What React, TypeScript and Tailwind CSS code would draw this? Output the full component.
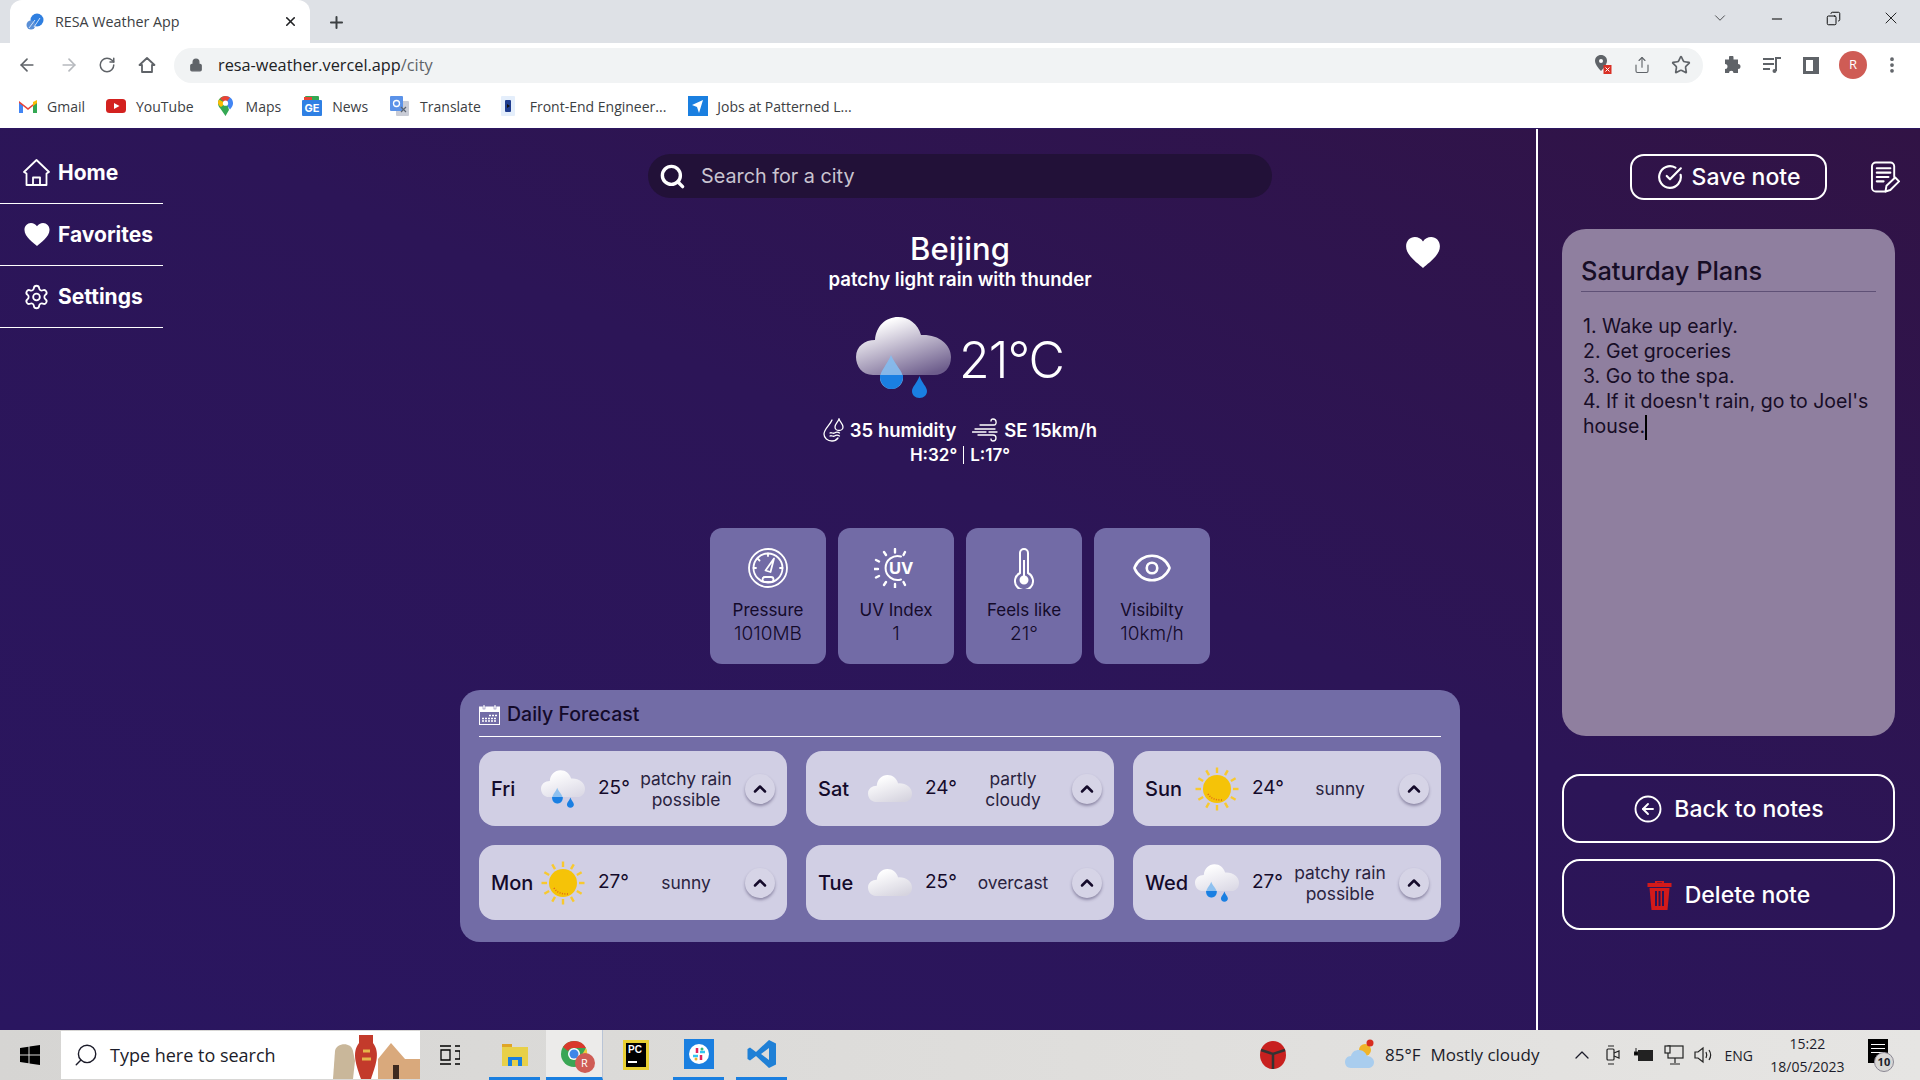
import {
  ArrowLeft,
  ArrowRight,
  ChevronDown,
  ChevronUp,
  CircleArrowLeft,
  CircleCheckBig,
  Copy,
  Eye,
  Lock,
  Minus,
  MoreVertical,
  Plus,
  RotateCw,
  Search,
  Settings,
  Share,
  Star,
  X,
} from 'lucide-react';

const Heart = ({ className }: { className: string }) => (
  <svg viewBox="0 0 24 22" className={className} fill="white">
    <path d="M12 22C9 19 0 13.5 0 6.5 0 2.8 2.8 0 6.2 0 8.6 0 10.8 1.2 12 3.2 13.2 1.2 15.4 0 17.8 0 21.2 0 24 2.8 24 6.5 24 13.5 15 19 12 22Z" />
  </svg>
);

const HouseIcon = () => (
  <svg viewBox="0 0 27 27" className="w-[27px] h-[27px]" fill="none" stroke="white" strokeWidth="1.8" strokeLinejoin="round">
    <path d="M1 13 13.5 1 26 13 23.5 14.5V26H3.5V14.5Z" />
    <path d="M10 26V18.5H17V26" />
  </svg>
);

const Cloud = ({ top, bottom, id }: { top: string; bottom: string; id: string }) => (
  <>
    <defs>
      <linearGradient id={id} x1="0.2" y1="0" x2="0.75" y2="1">
        <stop offset="0.1" stopColor={top} />
        <stop offset="1" stopColor={bottom} />
      </linearGradient>
    </defs>
    <path
      d="M17 58C6 58 0 49 0 40 0 29 9 23 19 23 20 9 30 0 42 0 53 0 62 7 65 18 82 17 95 27 95 40 95 51 88 58 78 58Z"
      fill={`url(#${id})`}
    />
  </>
);

const Drops = () => (
  <>
    <path d="M35 38C31 48 24 54 24 61 24 67 29 72 35.5 72 42 72 47 67 47 61 47 54 39 48 35 38Z" fill="#84bdf0" fillOpacity="0.9" />
    <path d="M24 58H47C47.5 66 42 72 35.5 72 29 72 23.5 66 24 58Z" fill="#1a7fe2" />
    <path d="M63.5 59C61 66 56 70 56 74 56 78 59 81 63.5 81 68 81 71 78 71 74 71 70 66 66 63.5 59Z" fill="#1a7fe2" />
  </>
);

const BigRainCloud = () => (
  <svg viewBox="0 0 95 81" className="w-[95px] h-[81px] shrink-0">
    <Cloud id="bigCloud" top="#ffffff" bottom="#6d5d8c" />
    <Drops />
  </svg>
);

const SmallRainCloud = () => (
  <svg viewBox="0 0 95 81" className="w-[44px] h-[38px]">
    <Cloud id="rainCloud" top="#ffffff" bottom="#dcdae6" />
    <Drops />
  </svg>
);

const SmallCloud = () => (
  <svg viewBox="0 0 95 58" className="w-[44px] h-[27px]">
    <Cloud id="plainCloud" top="#ffffff" bottom="#d6d4df" />
  </svg>
);

const SunIcon = () => (
  <svg viewBox="0 0 44 44" className="w-[44px] h-[44px]">
    {[0, 30, 60, 90, 120, 150, 180, 210, 240, 270, 300, 330].map((r) => (
      <rect key={r} x="20.8" y="0.5" width="2.4" height="5.5" fill="#f8c92f" transform={`rotate(${r} 22 22)`} />
    ))}
    <circle cx="22" cy="22" r="14" fill="#f5c308" />
    <path d="M13 27C16 32 21 33 27 33" stroke="#e0651a" strokeWidth="1.5" strokeDasharray="1 1.5" fill="none" />
  </svg>
);

const GaugeIcon = () => (
  <svg viewBox="0 0 40 40" className="w-[40px] h-[40px]" fill="none" stroke="white" strokeWidth="1.8" strokeLinecap="round">
    <circle cx="20" cy="20" r="19" />
    <circle cx="20" cy="20" r="14.5" />
    <path d="M17.5 22.5 26 10.5 22.5 24Z" strokeLinejoin="round" />
    <path d="M20 5.5V8M9.5 10.5 11.5 12.5M5.5 20H8M34.5 20H32" />
    <rect x="14.5" y="29" width="11" height="5" rx="2.5" />
  </svg>
);

const UvIcon = () => (
  <svg viewBox="0 0 44 40" className="w-[44px] h-[40px]" fill="none" stroke="white" strokeWidth="2" strokeLinecap="round">
    <path d="M27 8.5A12 12 0 1 0 27 31.5" />
    <path d="M21 1V4.5M10 4 12 7M2 12 5 13.5M0.5 21H4M2 29.5 5 28M10 37 12 34M21 39.5V36M31 4 29.5 7M31 37 29.5 34" strokeWidth="2.4" />
    <text x="15" y="26" fill="white" stroke="none" fontSize="16.5" fontWeight="700" fontFamily="Inter, sans-serif">
      UV
    </text>
  </svg>
);

const ThermometerIcon = () => (
  <svg viewBox="0 0 20 41" className="w-[20px] h-[41px]" fill="none" stroke="white" strokeWidth="2">
    <path d="M6 25V5A4 4 0 0 1 14 5V25A9 9 0 1 1 6 25Z" />
    <circle cx="10" cy="32" r="3.5" fill="white" />
    <path d="M10 12V30" />
  </svg>
);

const CalendarIcon = () => (
  <svg viewBox="0 0 21 20" className="w-[21px] h-[20px]">
    <rect x="0" y="1.5" width="21" height="18.5" fill="white" />
    <rect x="1" y="7" width="19" height="12" fill="#726ca6" />
    <rect x="4" y="0" width="2" height="4" fill="white" stroke="#726ca6" strokeWidth="0.5" />
    <rect x="15" y="0" width="2" height="4" fill="white" stroke="#726ca6" strokeWidth="0.5" />
    <path d="M3 16H18M3 13.5H18M10 10.5H18" stroke="white" strokeWidth="1.5" strokeDasharray="2 1" />
  </svg>
);

const NoteEditIcon = () => (
  <svg viewBox="0 0 30 32" className="w-[29px] h-[32px]" fill="none" stroke="white" strokeWidth="2" strokeLinecap="round">
    <path d="M15 31H5A4 4 0 0 1 1 27V5A4 4 0 0 1 5 1H20A4 4 0 0 1 24 5V16" />
    <path d="M6 7H20M6 11.5H20M6 16H18M6 20.5H13" strokeWidth="2.2" />
    <path d="M15 31 16 25 25 16.5 29 20.5 20 29.5Z" strokeLinejoin="round" />
  </svg>
);

const TrashIcon = () => (
  <svg viewBox="0 0 25 30" className="w-[25px] h-[30px]" fill="#d31a1a">
    <path d="M8 3V1H17V3H24.5V7H0.5V3ZM10 3H15V2.5H10Z" />
    <path d="M2.5 8H22.5L20.5 30H4.5ZM8 11V26H10V11ZM11.5 11V26H13.5V11ZM15 11V26H17V11Z" fillRule="evenodd" />
  </svg>
);

const HumidityIcon = () => (
  <svg viewBox="0 0 21 24" className="w-[21px] h-[24px]" fill="none" stroke="white" strokeWidth="1.3" strokeLinecap="round">
    <path d="M9 2C7 7 1 11 1 16 1 20 4.5 23 9 23 11.5 23 13.5 22 15 20" />
    <path d="M16 1C15 4 12 6 12 9 12 11 14 12.5 16 12.5 18 12.5 20 11 20 9 20 6 17 4 16 1Z" />
    <path d="M7 15C8.5 14 10 16 11.5 15S15 14 16.5 15M7 18C8.5 17 10 19 11.5 18S15 17 16.5 18" />
  </svg>
);

const WindIcon = () => (
  <svg viewBox="0 0 26 24" className="w-[26px] h-[24px]" fill="none" stroke="white" strokeWidth="1.3" strokeLinecap="round">
    <path d="M8 7H22C25 7 25 1 21 1 19.5 1 19 2 19 3" />
    <path d="M3 11H23M0.5 14H14M17 14H25" />
    <path d="M6 17H21C25 17 25 23 21 23 19.5 23 19 22 19 21" />
  </svg>
);

const Favicon = () => (
  <svg viewBox="0 0 18 18" className="w-[18px] h-[18px]">
    <circle cx="11" cy="7" r="6.5" fill="#2f7fe0" />
    <circle cx="5" cy="12" r="4.5" fill="#5a8fd6" />
    <path d="M3 15 9 7M8 14 14 5" stroke="#cfe2fa" strokeWidth="1" />
  </svg>
);

const GmailIcon = () => (
  <svg viewBox="0 0 18 14" className="w-[18px] h-[14px]">
    <path d="M0 2 9 9 18 2V14H14V7L9 11 4 7V14H0Z" fill="#ea4335" />
    <path d="M0 14H4V7L0 4Z" fill="#4285f4" />
    <path d="M14 14H18V4L14 7Z" fill="#34a853" />
    <path d="M14 7 18 4V1L14 3Z" fill="#fbbc04" />
  </svg>
);

const YoutubeIcon = () => (
  <svg viewBox="0 0 20 14" className="w-[20px] h-[14px]">
    <rect width="20" height="14" rx="3.5" fill="#d3211f" />
    <path d="M8 4 13.5 7 8 10Z" fill="white" />
  </svg>
);

const MapsIcon = () => (
  <svg viewBox="0 0 15 20" className="w-[15px] h-[20px]">
    <path d="M7.5 0C3.5 0 0 3 0 7.2 0 9.5 1 11 2.5 12.8L7.5 20 11 14Z" fill="#34a853" />
    <path d="M7.5 0C11.5 0 15 3 15 7.2 15 9.5 14 11 12 13.5L7.5 7Z" fill="#4285f4" />
    <path d="M1 3.5 7.5 7.2 3 11C1 9.5 0 8 0 7 0 5.5 0.5 4.5 1 3.5Z" fill="#fbbc04" />
    <path d="M2 2.5C3.5 1 5.5 0 7.5 0 9 0 10.5 0.5 12 1.5L7.5 7.2Z" fill="#ea4335" />
    <circle cx="7.5" cy="7.2" r="2.6" fill="white" />
  </svg>
);

const NewsIcon = () => (
  <svg viewBox="0 0 20 20" className="w-[20px] h-[20px]">
    <rect x="3" y="0" width="14" height="8" rx="1" fill="#34a853" />
    <rect x="2" y="1" width="8" height="6" fill="#ea4335" />
    <rect x="0" y="4" width="20" height="16" rx="1" fill="#2f80e4" />
    <text x="2.5" y="15.5" fontSize="11" fontWeight="700" fill="white" fontFamily="Inter, sans-serif">
      GE
    </text>
  </svg>
);

const TranslateIcon = () => (
  <svg viewBox="0 0 19 20" className="w-[19px] h-[20px]">
    <rect x="6" y="5" width="13" height="15" rx="1" fill="#c9ccd6" />
    <rect x="0" y="0" width="13" height="15" rx="1" fill="#5b92e8" />
    <circle cx="6.5" cy="7.5" r="3" fill="none" stroke="white" strokeWidth="1.3" />
    <path d="M11 11 16 16M16 11 11 16" stroke="#5b6472" strokeWidth="1.2" />
  </svg>
);

const FrontEndIcon = () => (
  <svg viewBox="0 0 14 20" className="w-[14px] h-[20px]">
    <rect width="14" height="20" rx="1" fill="#e4eefb" />
    <rect x="4" y="4" width="6" height="12" rx="1" fill="#1f3d8f" />
    <path d="M6 8 9 10 6 12Z" fill="#111" />
  </svg>
);

const JobsIcon = () => (
  <svg viewBox="0 0 20 20" className="w-[20px] h-[20px]">
    <rect width="20" height="20" fill="#1a7fe0" />
    <path d="M15 4 4 9 9 11 11 17Z" fill="white" />
  </svg>
);

const bookmarks = [
  { icon: GmailIcon, label: 'Gmail', gap: 'ml-[19px]', textGap: 'ml-[10px]' },
  { icon: YoutubeIcon, label: 'YouTube', gap: 'ml-[21px]', textGap: 'ml-[10px]' },
  { icon: MapsIcon, label: 'Maps', gap: 'ml-[24px]', textGap: 'ml-[13px]' },
  { icon: NewsIcon, label: 'News', gap: 'ml-[21px]', textGap: 'ml-[10px]' },
  { icon: TranslateIcon, label: 'Translate', gap: 'ml-[22px]', textGap: 'ml-[11px]' },
  { icon: FrontEndIcon, label: 'Front-End Engineer...', gap: 'ml-[20px]', textGap: 'ml-[15px]' },
  { icon: JobsIcon, label: 'Jobs at Patterned L...', gap: 'ml-[22px]', textGap: 'ml-[9px]' },
];

const BrowserChrome = () => (
  <div className="font-['Open_Sans',sans-serif] text-[#3c4043]">
    <div className="h-[43px] bg-[#dee1e6] flex items-end">
      <div className="ml-[10px] w-[300px] h-[43px] bg-white rounded-t-xl flex items-center">
        <div className="ml-[16px]">
          <Favicon />
        </div>
        <span className="ml-[11px] text-[14.3px]">RESA Weather App</span>
        <X className="w-[15px] h-[15px] ml-auto mr-[12px] text-[#202124]" strokeWidth={2.5} />
      </div>
      <Plus className="w-[19px] h-[19px] ml-[17px] mb-[11px] text-[#3c4043]" strokeWidth={2.5} />
      <ChevronDown className="w-[18px] h-[18px] ml-auto mb-[16px] text-[#202124]" strokeWidth={1} />
      <Minus className="w-[16px] h-[16px] ml-[40px] mb-[16px] text-black" strokeWidth={1.5} />
      <Copy className="w-[15px] h-[15px] ml-[41px] mb-[17px] text-black -scale-x-100" strokeWidth={1.5} />
      <X className="w-[20px] h-[20px] ml-[40px] mr-[19px] mb-[15px] text-black" strokeWidth={1} />
    </div>
    <div className="h-[43px] bg-white flex items-center pt-[1px]">
      <ArrowLeft className="w-[20px] h-[20px] ml-[17px] text-[#5f6368]" strokeWidth={2} />
      <ArrowRight className="w-[20px] h-[20px] ml-[22px] text-[#b6b9be]" strokeWidth={2} />
      <RotateCw className="w-[18px] h-[18px] ml-[19px] text-[#5f6368]" strokeWidth={2} />
      <svg viewBox="0 0 18 18" className="w-[18px] h-[18px] ml-[22px]" fill="none" stroke="#5f6368" strokeWidth="1.8">
        <path d="M1.5 9 9 2 16.5 9H14V16H4V9Z" strokeLinejoin="round" />
      </svg>
      <div className="ml-[18px] w-[1529px] h-[35px] bg-[#f1f3f4] rounded-full flex items-center">
        <Lock className="w-[14px] h-[14px] ml-[15px] text-[#5f6368] fill-[#5f6368]" />
        <span className="ml-[15px] text-[16.3px]">
          <span className="text-[#202124]">resa-weather.vercel.app</span>
          <span className="text-[#5f6368]">/city</span>
        </span>
        <div className="ml-auto flex items-center gap-[20px] mr-[12px]">
          <svg viewBox="0 0 18 20" className="w-[18px] h-[20px]">
            <path d="M6 0C2.5 0 0 2.5 0 6 0 10 6 16 6 16S12 10 12 6C12 2.5 9.5 0 6 0Z" fill="#5f6368" />
            <circle cx="6" cy="6" r="2" fill="white" />
            <rect x="8.5" y="10" width="8" height="9" fill="#d93025" />
            <path d="M10.5 12.5 14.5 16.5M14.5 12.5 10.5 16.5" stroke="white" strokeWidth="1" />
          </svg>
          <Share className="w-[18px] h-[18px] text-[#5f6368]" strokeWidth={1.5} />
          <Star className="w-[20px] h-[20px] text-[#5f6368]" strokeWidth={2} />
        </div>
      </div>
      <svg viewBox="0 0 18 18" className="w-[18px] h-[18px] ml-[20px]" fill="#5f6368">
        <path d="M6 1.5A2 2 0 0 1 10.5 1.5V3.5H15V8A2.5 2.5 0 0 1 15 13V17H10.5A2.2 2.2 0 0 0 6 17H2V13A2.5 2.5 0 0 0 2 8V3.5H6Z" />
      </svg>
      <svg viewBox="0 0 20 18" className="w-[20px] h-[18px] ml-[21px]" fill="none" stroke="#5f6368" strokeWidth="2">
        <path d="M1 3H12M1 8H12M1 13H8M14 15V2H19" />
        <circle cx="12.5" cy="15" r="2" fill="#5f6368" stroke="none" />
      </svg>
      <div className="w-[16px] h-[17px] ml-[21px] border-[3px] border-[#5f6368] border-r-[6px]" />
      <div className="w-[28px] h-[28px] ml-[20px] rounded-full bg-[#cf5c55] text-white text-[13px] flex items-center justify-center">
        R
      </div>
      <MoreVertical className="w-[20px] h-[20px] ml-[15px] text-[#5f6368]" strokeWidth={2.5} />
    </div>
    <div className="h-[43px] bg-white flex items-center pb-[2px] border-b border-[#2b1660]">
      {bookmarks.map((b) => (
        <div key={b.label} className={`flex items-center ${b.gap}`}>
          <b.icon />
          <span className={`${b.textGap} text-[14px] whitespace-nowrap`}>{b.label}</span>
        </div>
      ))}
    </div>
  </div>
);

const navItems = [
  { icon: <HouseIcon />, label: 'Home' },
  { icon: <Heart className="w-[26px] h-[23px]" />, label: 'Favorites' },
  { icon: <Settings className="w-[28px] h-[28px] text-white" strokeWidth={1.6} />, label: 'Settings' },
];

const Sidebar = () => (
  <aside className="w-[384px] shrink-0">
    <nav className="w-[163px] pt-[13px]">
      {navItems.map((n) => (
        <div key={n.label} className="h-[62px] flex items-center border-b-[1.5px] border-white pl-[23px]">
          <span className="w-[27px] flex justify-center">{n.icon}</span>
          <span className="ml-[8px] text-[21px] font-bold text-white">{n.label}</span>
        </div>
      ))}
    </nav>
  </aside>
);

const stats = [
  { icon: <GaugeIcon />, label: 'Pressure', value: '1010MB' },
  { icon: <UvIcon />, label: 'UV Index', value: '1' },
  { icon: <ThermometerIcon />, label: 'Feels like', value: '21°' },
  { icon: <Eye className="w-[42px] h-[42px] text-white" strokeWidth={1.5} />, label: 'Visibilty', value: '10km/h' },
];

const forecast = [
  { day: 'Fri', icon: <SmallRainCloud />, temp: '25°', desc: 'patchy rain possible' },
  { day: 'Sat', icon: <SmallCloud />, temp: '24°', desc: 'partly cloudy' },
  { day: 'Sun', icon: <SunIcon />, temp: '24°', desc: 'sunny' },
  { day: 'Mon', icon: <SunIcon />, temp: '27°', desc: 'sunny' },
  { day: 'Tue', icon: <SmallCloud />, temp: '25°', desc: 'overcast' },
  { day: 'Wed', icon: <SmallRainCloud />, temp: '27°', desc: 'patchy rain possible' },
];

const MainPanel = () => (
  <main className="flex-1 flex flex-col items-center pt-[25px] text-white">
    <div className="w-[624px] h-[44px] rounded-full bg-[#221138] flex items-center">
      <Search className="w-[27px] h-[27px] ml-[11px] text-white" strokeWidth={3} />
      <span className="ml-[15px] mt-[1px] text-[19.8px] text-[#c9c4d0]">Search for a city</span>
    </div>

    <div className="w-[1000px] mt-[33px] grid grid-cols-[1fr_auto_1fr]">
      <div />
      <div className="flex flex-col items-center">
        <h1 className="text-[31px] leading-[36px] font-medium">Beijing</h1>
        <p className="text-[18.6px] leading-[25px] font-semibold">patchy light rain with thunder</p>
      </div>
      <div className="justify-self-end mr-[20px] mt-[6px]">
        <Heart className="w-[34px] h-[31px]" />
      </div>
    </div>

    <div className="mt-[25px] flex items-center">
      <BigRainCloud />
      <span className="ml-[8px] mt-[4px] text-[50px] leading-[60px] font-light tracking-[-1px]">21°C</span>
    </div>

    <div className="mt-[20px] flex items-center text-[18.5px] font-semibold leading-[24px]">
      <HumidityIcon />
      <span className="ml-[6px]">35 humidity</span>
      <span className="ml-[16px]">
        <WindIcon />
      </span>
      <span className="ml-[6px]">SE 15km/h</span>
    </div>
    <div className="mt-[1px] flex items-center text-[17px] font-semibold leading-[24px]">
      <span>H:32°</span>
      <span className="mx-[6px] w-px h-[18px] bg-white" />
      <span>L:17°</span>
    </div>

    <div className="mt-[61px] flex gap-[12px]">
      {stats.map((s) => (
        <div key={s.label} className="w-[116px] h-[136px] rounded-[12px] bg-[#726ba6] flex flex-col items-center pt-[19px] text-[#140a2a]">
          <div className="h-[42px] flex items-center justify-center">{s.icon}</div>
          <span className="mt-[9px] text-[17px] leading-[24px]">{s.label}</span>
          <span className="text-[19px] leading-[24px] font-light">{s.value}</span>
        </div>
      ))}
    </div>

    <section className="mt-[26px] w-[1000px] h-[252px] rounded-[20px] bg-[#726ca6] px-[19px] text-[#140a2a]">
      <div className="h-[47px] flex items-center gap-[7px] border-b-[1.5px] border-white pt-[3px]">
        <CalendarIcon />
        <span className="text-[19.5px] font-medium">Daily Forecast</span>
      </div>
      <div className="mt-[14px] grid grid-cols-3 gap-[19px]">
        {forecast.map((f) => (
          <div
            key={f.day}
            className="h-[75px] rounded-[16px] bg-[#d1cfe4] pl-[12px] grid grid-cols-[50px_44px_51px_100px_30px] items-center"
          >
            <span className="text-[20px] font-medium">{f.day}</span>
            <span className="flex justify-center">{f.icon}</span>
            <span className="pl-[13px] text-[19px]">{f.temp}</span>
            <span className="text-center text-[17.4px] leading-[21px] text-[#2a2340]">{f.desc}</span>
            <span className="ml-[9px] w-[30px] h-[30px] rounded-full bg-[#d6d4e6] shadow-[0_2px_3px_rgba(60,50,90,0.45)] flex items-center justify-center">
              <ChevronUp className="w-[20px] h-[20px]" strokeWidth={3} />
            </span>
          </div>
        ))}
      </div>
    </section>
  </main>
);

const NotePanel = () => (
  <aside className="w-[384px] shrink-0 border-l-2 border-white pl-[24px] pr-[25px] pt-[25px] text-white">
    <div className="flex items-center mr-[-5px]">
      <button className="ml-[68px] w-[197px] h-[46px] rounded-[14px] border-2 border-white flex items-center justify-center gap-[9px] text-[23px] font-medium">
        <CircleCheckBig className="w-[26px] h-[26px]" strokeWidth={2} />
        Save note
      </button>
      <span className="ml-[44px]">
        <NoteEditIcon />
      </span>
    </div>
    <div className="mt-[29px] h-[507px] rounded-[24px] bg-[#8f7f9f] px-[19px] text-[#170d26]">
      <div className="h-[63px] flex items-end pb-[1px] border-b border-[#5f5176]">
        <h2 className="text-[25.4px] font-medium">Saturday Plans</h2>
      </div>
      <div className="mt-[22px] pl-[2px] text-[19.5px] leading-[25px]">
        <p>1. Wake up early.</p>
        <p>2. Get groceries</p>
        <p>3. Go to the spa.</p>
        <p>
          4. If it doesn't rain, go to Joel's house.
          <span className="inline-block w-[2px] h-[25px] bg-black align-middle" />
        </p>
      </div>
    </div>
    <button className="mt-[38px] w-full h-[69px] rounded-[18px] border-2 border-white flex items-center justify-center gap-[11px] text-[23px] font-medium pt-[1px]">
      <CircleArrowLeft className="w-[30px] h-[30px]" strokeWidth={1.5} />
      Back to notes
    </button>
    <button className="mt-[16px] w-full h-[71px] rounded-[18px] border-2 border-white flex items-center justify-center gap-[13px] text-[23px] font-medium pt-[1px]">
      <TrashIcon />
      Delete note
    </button>
  </aside>
);

const Taskbar = () => (
  <footer className="h-[50px] bg-[linear-gradient(90deg,#d6d5d3,#e6e5e3)] flex items-center font-['Open_Sans',sans-serif] text-[#1c1c2a]">
    <svg viewBox="0 0 20 20" className="w-[20px] h-[20px] ml-[20px]" fill="black">
      <path d="M0 3 8.5 1.8V9.5H0ZM9.5 1.6 20 0V9.5H9.5ZM0 10.5H8.5V18.2L0 17ZM9.5 10.5H20V20L9.5 18.4Z" />
    </svg>
    <div className="ml-[21px] w-[359px] h-[48px] bg-white flex items-center overflow-hidden">
      <Search className="w-[26px] h-[26px] ml-[12px] -scale-x-100" strokeWidth={1.3} />
      <span className="ml-[11px] text-[18px]">Type here to search</span>
      <svg viewBox="0 0 87 48" className="w-[87px] h-[48px] ml-auto">
        <path d="M2 20C3 12 18 10 20 20L22 30 20 48H0Z" fill="#c9b79a" />
        <path d="M26 4H40V12C48 22 42 36 38 48H28C24 36 18 22 26 12Z" fill="#c33a2b" />
        <path d="M30 20H37M29 28H38" stroke="#e6b64a" strokeWidth="3" />
        <path d="M45 48V28L58 12 72 28H87V48Z" fill="#d9a97c" />
        <rect x="60" y="34" width="6" height="14" fill="#3d2a20" />
      </svg>
    </div>
    <svg viewBox="0 0 20 20" className="w-[20px] h-[20px] ml-[20px]" fill="none" stroke="black" strokeWidth="1.3">
      <path d="M0 1H11M0 19H11M1 5H10V15H1ZM15 1H20M15 6H20V14H15M15 19H20" />
    </svg>
    <div className="ml-[29px] w-[51px] h-[50px] flex items-center justify-center border-b-[3px] border-[#1a7fe0]">
      <svg viewBox="0 0 28 28" className="w-[28px] h-[28px]">
        <rect x="1" y="4" width="10" height="5" fill="#e0a526" />
        <rect x="1" y="7" width="26" height="19" fill="#e8d049" />
        <path d="M7 26V17H21V26H17V20H11V26Z" fill="#1a7fe0" />
      </svg>
    </div>
    <div className="ml-[6px] w-[57px] h-[50px] bg-[#ecebea] flex items-center justify-center border-b-[3px] border-[#1a7fe0] border-r border-r-[#b9c4d6]">
      <div className="relative w-[32px] h-[32px] ml-[3px]">
        <svg viewBox="0 0 32 32" className="w-[32px] h-[32px]">
          <circle cx="14" cy="16" r="13" fill="#3aa655" />
          <path d="M14 3A13 13 0 0 1 26 10H14A6 6 0 0 0 8 13L3 9A13 13 0 0 1 14 3Z" fill="#d9392c" />
          <path d="M26 10A13 13 0 0 1 20 27L14 20H20Z" fill="#eecb3a" />
          <circle cx="14" cy="16" r="6" fill="#ffffff" />
          <circle cx="14" cy="16" r="4.5" fill="#3f86e8" />
        </svg>
        <span className="absolute right-[-3px] bottom-[-3px] w-[20px] h-[20px] rounded-full bg-[#cf5c55] text-white text-[11px] leading-[20px] text-center">R</span>
      </div>
    </div>
    <div className="ml-[20px] w-[26px] h-[30px] bg-[#e8d034] flex items-center justify-center">
      <div className="w-[20px] h-[24px] bg-black text-[10px] font-bold leading-[13px] text-white pl-[2px] font-['Liberation_Sans',sans-serif]">
        PC
        <div className="w-[9px] h-[2px] bg-white mt-[5px]" />
      </div>
    </div>
    <div className="ml-[24px] w-[51px] h-[50px] flex items-center justify-center border-b-[3px] border-[#1a7fe0]">
      <div className="w-[30px] h-[30px] bg-[#1a7fe0] flex items-center justify-center">
        <svg viewBox="0 0 20 20" className="w-[20px] h-[20px]">
          <circle cx="10" cy="10" r="10" fill="white" />
          <path d="M8 4V9M12 11V16" stroke="#e0245e" strokeWidth="2.5" />
          <path d="M4 12H9M11 8H16" stroke="#36c5f0" strokeWidth="2.5" />
          <circle cx="13" cy="5" r="1.5" fill="#2eb67d" />
          <circle cx="7" cy="15" r="1.5" fill="#ecb22e" />
        </svg>
      </div>
    </div>
    <div className="ml-[12px] w-[51px] h-[50px] flex items-center justify-center border-b-[3px] border-[#1a7fe0]">
      <svg viewBox="0 0 30 30" className="w-[30px] h-[30px]">
        <path d="M22 1 29 4.5V25.5L22 29 9 17 3 21.5 0.5 20V10L3 8.5 9 13ZM22 9 14 15 22 21Z" fill="#1f80d6" fillRule="evenodd" />
      </svg>
    </div>
    <svg viewBox="0 0 26 28" className="w-[26px] h-[28px] ml-[473px]">
      <ellipse cx="13" cy="14" rx="13" ry="14" fill="#c8201f" />
      <path d="M1 9 13 13 25 9M13 13V28" stroke="#333" strokeWidth="2.5" fill="none" />
    </svg>
    <svg viewBox="0 0 30 32" className="w-[30px] h-[32px] ml-[59px]">
      <circle cx="20" cy="11" r="6" fill="#f0b429" />
      <circle cx="25" cy="4" r="3.5" fill="#d82d20" />
      <path d="M6 29C2 29 0 26 0 23 0 20 2 17 6 17 7 13 10 11 14 11 18 11 21 14 22 17 26 17 29 20 29 23 29 27 26 29 23 29Z" fill="#a9cdee" />
    </svg>
    <span className="ml-[10px] text-[17px] whitespace-nowrap">85°F</span>
    <span className="ml-[10px] text-[17px] whitespace-nowrap">Mostly cloudy</span>
    <ChevronUp className="w-[24px] h-[24px] ml-[31px]" strokeWidth={1.3} />
    <svg viewBox="0 0 14 22" className="w-[14px] h-[22px] ml-[12px]" fill="none" stroke="#222" strokeWidth="1.2">
      <rect x="1" y="5" width="7" height="11" rx="1" />
      <path d="M8 9 13 7V14L8 12" />
      <path d="M2 2H8M2 20H8" />
    </svg>
    <svg viewBox="0 0 20 14" className="w-[20px] h-[14px] ml-[14px]">
      <rect x="4" y="2" width="15" height="11" fill="#222" />
      <path d="M2 0V4M0 4H4V7H0Z" stroke="#222" strokeWidth="1" />
    </svg>
    <svg viewBox="0 0 20 20" className="w-[20px] h-[20px] ml-[10px]" fill="none" stroke="#222" strokeWidth="1.2">
      <rect x="4" y="1" width="15" height="12" />
      <rect x="1" y="1" width="5" height="7" fill="#e6e5e3" />
      <path d="M11 13V18M6 19H16" />
    </svg>
    <svg viewBox="0 0 20 20" className="w-[20px] h-[20px] ml-[10px]" fill="none" stroke="#222" strokeWidth="1.2">
      <path d="M1 7V13H4L9 17V3L4 7Z" />
      <path d="M12 7C13 9 13 11 12 13M15 5C17 8 17 12 15 15" />
    </svg>
    <span className="ml-[10px] text-[14px]">ENG</span>
    <div className="ml-[17px] w-[75px] flex flex-col items-center text-[14px] leading-[23px]">
      <span>15:22</span>
      <span>18/05/2023</span>
    </div>
    <div className="relative ml-[23px] w-[26px] h-[34px]">
      <div className="w-[20px] h-[24px] bg-black mt-[1px] flex flex-col gap-[3px] pt-[5px] px-[3px]">
        <div className="h-px bg-white" />
        <div className="h-px bg-white" />
        <div className="h-px bg-white" />
      </div>
      <span className="absolute right-0 bottom-0 w-[20px] h-[20px] rounded-full bg-[#d8d7d6] border border-[#8a8793] text-[11px] font-bold leading-[18px] text-center">
        10
      </span>
    </div>
  </footer>
);

export default function App() {
  return (
    <div className="w-[1920px] h-[1080px] flex flex-col overflow-hidden font-['Inter',sans-serif]">
      <BrowserChrome />
      <div className="flex-1 min-h-0 flex bg-[linear-gradient(205deg,#311345_0%,#2c1557_45%,#2a1660_100%)]">
        <Sidebar />
        <MainPanel />
        <NotePanel />
      </div>
      <Taskbar />
    </div>
  );
}
